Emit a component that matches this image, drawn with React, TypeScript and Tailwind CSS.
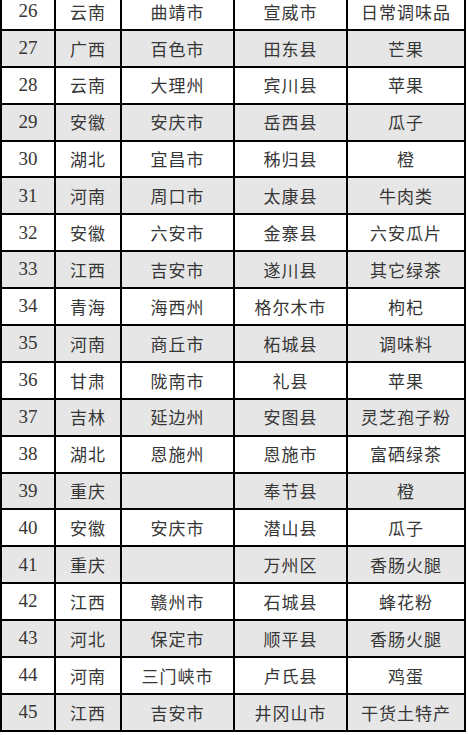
const rows: [string, string, string, string, string][] = [
  ['26', '云南', '曲靖市', '宣威市', '日常调味品'],
  ['27', '广西', '百色市', '田东县', '芒果'],
  ['28', '云南', '大理州', '宾川县', '苹果'],
  ['29', '安徽', '安庆市', '岳西县', '瓜子'],
  ['30', '湖北', '宜昌市', '秭归县', '橙'],
  ['31', '河南', '周口市', '太康县', '牛肉类'],
  ['32', '安徽', '六安市', '金寨县', '六安瓜片'],
  ['33', '江西', '吉安市', '遂川县', '其它绿茶'],
  ['34', '青海', '海西州', '格尔木市', '枸杞'],
  ['35', '河南', '商丘市', '柘城县', '调味料'],
  ['36', '甘肃', '陇南市', '礼县', '苹果'],
  ['37', '吉林', '延边州', '安图县', '灵芝孢子粉'],
  ['38', '湖北', '恩施州', '恩施市', '富硒绿茶'],
  ['39', '重庆', '', '奉节县', '橙'],
  ['40', '安徽', '安庆市', '潜山县', '瓜子'],
  ['41', '重庆', '', '万州区', '香肠火腿'],
  ['42', '江西', '赣州市', '石城县', '蜂花粉'],
  ['43', '河北', '保定市', '顺平县', '香肠火腿'],
  ['44', '河南', '三门峡市', '卢氏县', '鸡蛋'],
  ['45', '江西', '吉安市', '井冈山市', '干货土特产'],
];

const cell = 'flex items-center justify-center border-r-2 border-b-2 border-black';
const cjk = "font-['Noto_Sans_CJK_SC',sans-serif] text-[17px] tracking-[1px]";

export default function App() {
  return (
    <div className="w-[468px] h-[735px] overflow-hidden bg-white">
      <div className="-mt-[6px] w-[466px] border-l-2 border-black text-[#363636]">
        {rows.map((r, i) => (
          <div
            key={r[0]}
            className={`grid h-[36.9px] grid-cols-[54px_66px_113px_113px_118px] ${i % 2 === 1 ? 'bg-[#e6e6e6]' : 'bg-white'}`}
          >
            <div className={`${cell} font-['Liberation_Serif',serif] text-[19px]`}>{r[0]}</div>
            <div className={`${cell} ${cjk}`}>{r[1]}</div>
            <div className={`${cell} ${cjk}`}>{r[2]}</div>
            <div className={`${cell} ${cjk}`}>{r[3]}</div>
            <div className={`${cell} ${cjk}`}>{r[4]}</div>
          </div>
        ))}
      </div>
    </div>
  );
}
